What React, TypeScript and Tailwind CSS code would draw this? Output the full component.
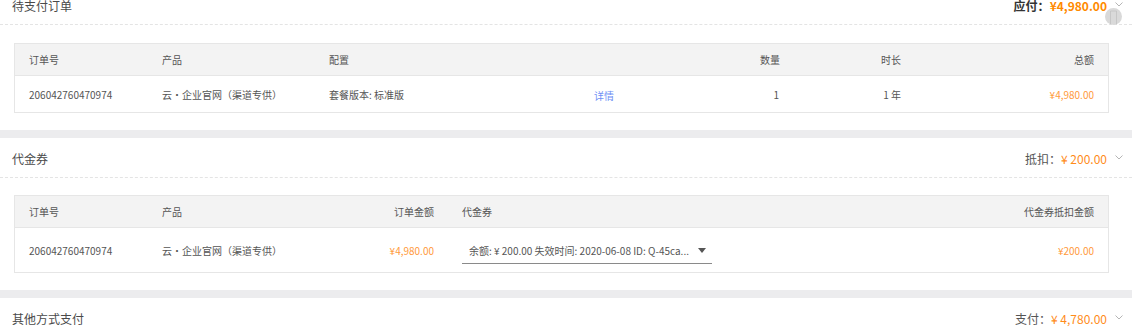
import React from "react";

const FONT = { fontFamily: '"Noto Sans CJK SC", "Liberation Sans", sans-serif' };

function Chevron() {
  return (
    <svg width="8" height="5" viewBox="0 0 8 5" className="ml-[8px] -mt-[2px]">
      <path d="M0.5 0.5 L4 4 L7.5 0.5" fill="none" stroke="#b5b5b5" strokeWidth="1" />
    </svg>
  );
}

function SectionHeader({ title, label, amount, bold }: { title: string; label: string; amount: string; bold?: boolean }) {
  return (
    <div className="h-[40px] flex items-center justify-between pl-[12px] pr-[9px] pt-[2px] border-b border-dashed border-[#e4e4e4] text-[12px] whitespace-nowrap">
      <span className="text-[#4a4a4a]">{title}</span>
      <div className="flex items-center">
        <span className={bold ? "text-[#333] font-bold" : "text-[#555]"}>{label}</span>
        <span className={bold ? "text-[#ff8a00] font-bold" : "text-[#ff8c1a]"}>{amount}</span>
        <Chevron />
      </div>
    </div>
  );
}

function Band() {
  return <div className="h-[8px] bg-[#ececee]" />;
}

const COLS1 = "grid grid-cols-[133px_167px_265px_214px_121px_193px] items-center text-[#555] whitespace-nowrap";
const COLS2 = "grid grid-cols-[133px_167px_133px_353px_307px] items-center text-[#555] whitespace-nowrap";

export default function App() {
  return (
    <div className="relative w-[1132px] h-[333px] overflow-hidden bg-white" style={FONT}>
      <div className="-mt-[15px]">
        {/* Section 1 */}
        <SectionHeader title="待支付订单" label="应付：" amount="¥4,980.00" bold />
        <div className="pt-[18px] pb-[17px] pl-[14px] pr-[23px]">
          <div className="border border-[#e6e6e6] text-[10px]">
            <div className={"h-[32px] bg-[#f3f3f3] border-b border-[#e6e6e6] " + COLS1}>
              <div className="pl-[14px]">订单号</div>
              <div className="pl-[14px]">产品</div>
              <div className="pl-[14px]">配置</div>
              <div className="pr-[14px] text-right">数量</div>
              <div className="pr-[14px] text-right">时长</div>
              <div className="pr-[14px] text-right">总额</div>
            </div>
            <div className={"h-[36px] " + COLS1}>
              <div className="pl-[14px]">206042760470974</div>
              <div className="pl-[14px]">云·企业官网（渠道专供）</div>
              <div className="pl-[14px]">套餐版本: 标准版</div>
              <div className="flex items-center justify-between">
                <span className="pl-[14px] mt-[3px] text-[#6f8ff5]">详情</span>
                <span className="pr-[15px]">1</span>
              </div>
              <div className="pr-[14px] text-right">1 年</div>
              <div className="pr-[14px] text-right text-[#ff9a3c]">¥4,980.00</div>
            </div>
          </div>
        </div>
        <Band />

        {/* Section 2 */}
        <SectionHeader title="代金券" label="抵扣：" amount="¥ 200.00" />
        <div className="pt-[17px] pb-[17px] pl-[14px] pr-[23px]">
          <div className="border border-[#e6e6e6] text-[10px]">
            <div className={"h-[32px] bg-[#f3f3f3] border-b border-[#e6e6e6] " + COLS2}>
              <div className="pl-[14px]">订单号</div>
              <div className="pl-[14px]">产品</div>
              <div className="pr-[14px] text-right">订单金额</div>
              <div className="pl-[14px]">代金券</div>
              <div className="pr-[14px] text-right">代金券抵扣金额</div>
            </div>
            <div className={"h-[44px] " + COLS2}>
              <div className="pl-[14px]">206042760470974</div>
              <div className="pl-[14px]">云·企业官网（渠道专供）</div>
              <div className="pr-[14px] text-right text-[#ff9a3c]">¥4,980.00</div>
              <div className="pl-[14px]">
                <div className="w-[250px] h-[27px] border-b-[1.5px] border-[#8a8a8a] flex items-center justify-between pl-[7px] pr-[6px] mt-[1px]">
                  <span className="text-[#555]">余额: ¥ 200.00 失效时间: 2020-06-08 ID: Q-45ca...</span>
                  <svg width="8" height="5" viewBox="0 0 8 5">
                    <path d="M0 0 L8 0 L4 5 Z" fill="#555" />
                  </svg>
                </div>
              </div>
              <div className="pr-[14px] text-right text-[#ff9a3c]">¥200.00</div>
            </div>
          </div>
        </div>
        <Band />

        {/* Section 3 */}
        <SectionHeader title="其他方式支付" label="支付：" amount="¥ 4,780.00" />
      </div>

      {/* floating circle button */}
      <div className="absolute left-[1105px] top-[8px] w-[17px] h-[17px] rounded-full bg-[#d9d9d9] overflow-hidden">
        <svg width="17" height="17" viewBox="0 0 17 17">
          <path d="M5.5 17 L5.5 3 L11.5 3 L11.5 17" fill="none" stroke="#c2c2c2" strokeWidth="0.8" />
        </svg>
      </div>
    </div>
  );
}
